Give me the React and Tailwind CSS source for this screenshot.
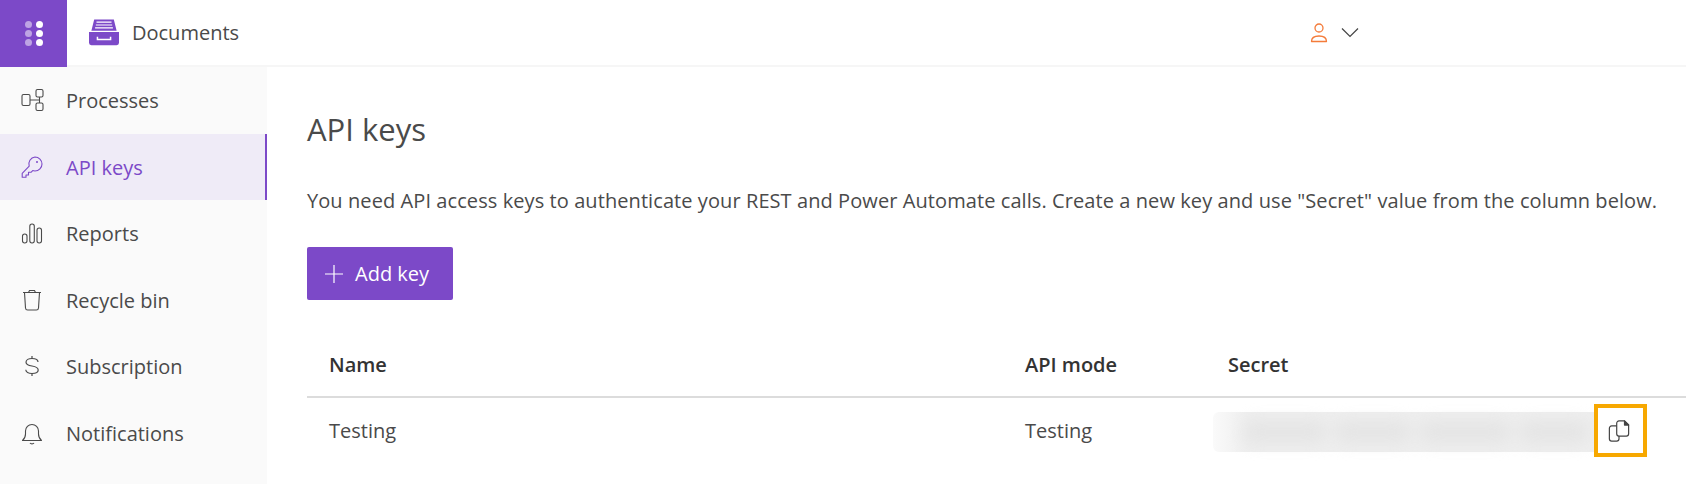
import React from 'react';

const font = 'font-["Open_Sans","Noto_Sans",sans-serif]';

function ProcessesIcon() {
  return (
    <svg width="24" height="24" viewBox="0 0 24 24" fill="none" stroke="currentColor" strokeWidth="1.1">
      <rect x="2" y="6.5" width="8" height="11" rx="1.5" />
      <rect x="16" y="1.5" width="7" height="7.5" rx="1.5" />
      <rect x="16" y="15" width="7" height="7.5" rx="1.5" />
      <path d="M10 12H19.5M19.5 9V15" />
    </svg>
  );
}

function KeyIcon() {
  return (
    <svg width="24" height="24" viewBox="0 0 24 24" fill="none" stroke="currentColor" strokeWidth="1.1">
      <path d="M15 2a7 7 0 0 1 0 14c-.8 0-1.6-.1-2.3-.4L11 17.3H8.5V20H6v2.2H2.2V18.4l7-7.2A7 7 0 0 1 15 2Z" strokeLinejoin="round" />
      <circle cx="17" cy="7" r="1" fill="currentColor" stroke="none" />
    </svg>
  );
}

function ReportsIcon() {
  return (
    <svg width="24" height="24" viewBox="0 0 24 24" fill="none" stroke="currentColor" strokeWidth="1.1">
      <rect x="2.5" y="13" width="4.5" height="9" rx="2.2" />
      <rect x="9.8" y="3" width="4.5" height="19" rx="2.2" />
      <rect x="17" y="7" width="4.5" height="15" rx="2.2" />
    </svg>
  );
}

function BinIcon() {
  return (
    <svg width="24" height="24" viewBox="0 0 24 24" fill="none" stroke="currentColor" strokeWidth="1.1">
      <path d="M3 4.5h18M4.5 4.5l1 15.5a2.2 2.2 0 0 0 2.2 2h8.6a2.2 2.2 0 0 0 2.2-2l1-15.5" />
      <path d="M8.5 4.5 9.5 2.5h5l1 2" />
    </svg>
  );
}

function DollarIcon() {
  return (
    <svg width="24" height="24" viewBox="0 0 24 24" fill="none" stroke="currentColor" strokeWidth="1.2">
      <path d="M18 8C18 6 15.5 4.5 12 4.5S6 6 6 8.2s2.5 3.2 6 3.8 6.2 1.6 6.2 4-2.7 3.5-6.2 3.5-6.2-1.5-6.2-3.7" />
      <path d="M12 2v2.5M12 19.5V22" />
    </svg>
  );
}

function BellIcon() {
  return (
    <svg width="24" height="24" viewBox="0 0 24 24" fill="none" stroke="currentColor" strokeWidth="1.1">
      <path d="M2.5 19.5c2-1.8 3-3.5 3-6.5V10a6.5 6.5 0 0 1 13 0v3c0 3 1 4.7 3 6.5Z" strokeLinejoin="round" />
      <path d="M10 22c.8 1.2 3.2 1.2 4 0" />
    </svg>
  );
}

function DrawerIcon() {
  return (
    <svg width="30" height="27" viewBox="0 0 32 28" fill="#7c49c8">
      <path d="M5.5 0h21l3 12H2.5Z" />
      <path d="M8 3h16M7.3 6h17.4M6.5 9h19" stroke="#fff" strokeWidth="1.3" />
      <path d="M0 13.5h32V25a2.5 2.5 0 0 1-2.5 2.5h-27A2.5 2.5 0 0 1 0 25Z" />
      <path d="M9 18.5V21.5H23V18.5" fill="none" stroke="#fff" strokeWidth="1.6" />
    </svg>
  );
}

function CopyIcon() {
  return (
    <svg width="22" height="22" viewBox="0 0 24 24" fill="none" stroke="#444" strokeWidth="1.3" strokeLinejoin="round">
      <path d="M9.5 6.5H4A2.5 2.5 0 0 0 1.5 9v11.5A2.5 2.5 0 0 0 4 23h5.5a2.5 2.5 0 0 0 2.5-2.5v-3" />
      <path d="M12 1h6l4.5 4.5V15a2.5 2.5 0 0 1-2.5 2.5h-8A2.5 2.5 0 0 1 9.5 15V3.5A2.5 2.5 0 0 1 12 1Z" />
      <path d="M18 1v4.5h4.5Z" fill="#444" />
    </svg>
  );
}

const navItems = [
  { label: 'Processes', icon: <ProcessesIcon /> },
  { label: 'API keys', icon: <KeyIcon />, active: true },
  { label: 'Reports', icon: <ReportsIcon /> },
  { label: 'Recycle bin', icon: <BinIcon /> },
  { label: 'Subscription', icon: <DollarIcon /> },
  { label: 'Notifications', icon: <BellIcon /> },
];

const blurBlobs = ['w-[84px]', 'w-[76px]', 'w-[92px]', 'w-[70px]'];

function Topbar() {
  return (
    <header className="flex h-[67px] shrink-0 items-center bg-white shadow-[inset_0_-2px_0_#f6f6f6]">
      <div className="flex h-[67px] w-[67px] shrink-0 items-center justify-center bg-[#7c49c8]">
        <div className="grid grid-cols-2 gap-x-[4px] gap-y-[2px]">
          {[0, 1, 2].map((i) => (
            <React.Fragment key={i}>
              <span className="h-[7px] w-[7px] rounded-full bg-white/50" />
              <span className="h-[7px] w-[7px] rounded-full bg-white" />
            </React.Fragment>
          ))}
        </div>
      </div>
      <div className="mb-[2px] ml-[22px] flex items-center">
        <DrawerIcon />
        <span className="ml-[13px] text-[20px] text-[#4a4a4a]">Documents</span>
      </div>
      <div className="mb-[2px] ml-[1071px] flex items-center gap-[13px]">
        <svg width="18" height="20" viewBox="0 0 18 20" fill="none" stroke="#f47b3a" strokeWidth="1.3">
          <circle cx="9" cy="5" r="4" />
          <path d="M1.5 18.5c0-4 3-5.5 7.5-5.5s7.5 1.5 7.5 5.5Z" strokeLinejoin="round" />
        </svg>
        <svg width="18" height="11" viewBox="0 0 18 11" fill="none" stroke="#444" strokeWidth="1.2">
          <path d="M1 1.5 9 9.5l8-8" />
        </svg>
      </div>
    </header>
  );
}

function Sidebar() {
  return (
    <nav className="w-[267px] shrink-0 bg-[#fafafa]">
      {navItems.map((item) => (
        <div
          key={item.label}
          className={
            item.active
              ? 'flex h-[66.5px] items-center border-r-2 border-[#7c49c8] bg-[#efebf7] pl-[20px] text-[#7c49c8]'
              : 'flex h-[66.5px] items-center pl-[20px] text-[#4a4a4a]'
          }
        >
          <span className="w-[46px] shrink-0">{item.icon}</span>
          <span className="pt-[2px] text-[20px]">{item.label}</span>
        </div>
      ))}
    </nav>
  );
}

function Main() {
  return (
    <main className="min-w-0 flex-1 pl-[40px] text-[#3f3f3f]">
      <h1 className="mt-[43px] text-[31px] leading-[38px] text-[#4a4a4a]">API keys</h1>
      <p className="mt-[40px] whitespace-nowrap text-[20px] leading-[26px] tracking-[0.08px] text-[#4a4a4a]">
        You need API access keys to authenticate your REST and Power Automate calls. Create a new key and use "Secret" value from the column below.
      </p>
      <button className="mt-[33px] flex h-[53px] w-[146px] items-center gap-[12px] rounded-[2px] bg-[#7c49c8] pl-[18px] text-[20px] text-white">
        <svg width="18" height="18" viewBox="0 0 18 18" fill="none" stroke="#fff" strokeWidth="1.2">
          <path d="M9 0v18M0 9h18" />
        </svg>
        Add key
      </button>
      <div className="mt-[32px] flex h-[66px] items-center border-b-2 border-[#dcdcdc] pt-[2px] text-[20px] font-semibold text-[#333]">
        <span className="ml-[22px] w-[696px]">Name</span>
        <span className="w-[203px]">API mode</span>
        <span>Secret</span>
      </div>
      <div className="flex h-[66px] items-center text-[20px] text-[#4a4a4a]">
        <span className="ml-[22px] w-[696px]">Testing</span>
        <span className="w-[188px]">Testing</span>
        <div className="relative mt-[2px] h-[40px] w-[434px] rounded-[6px] bg-linear-to-r from-[#fafafa] to-[#eeeeee] to-[8%]">
          <div className="flex h-full items-center gap-[8px] pl-[30px] blur-[8px]">
            {blurBlobs.map((w) => (
              <span key={w} className={`${w} h-[20px] rounded-full bg-[#e4e4e4]`} />
            ))}
          </div>
          <div className="absolute left-[381px] top-[-8px] flex h-[53px] w-[53px] items-center justify-center border-4 border-[#f7a800] bg-white pr-[3px]">
            <CopyIcon />
          </div>
        </div>
      </div>
    </main>
  );
}

export default function App() {
  return (
    <div className={`flex h-[484px] w-[1686px] flex-col overflow-hidden bg-white ${font}`}>
      <Topbar />
      <div className="flex flex-1">
        <Sidebar />
        <Main />
      </div>
    </div>
  );
}
